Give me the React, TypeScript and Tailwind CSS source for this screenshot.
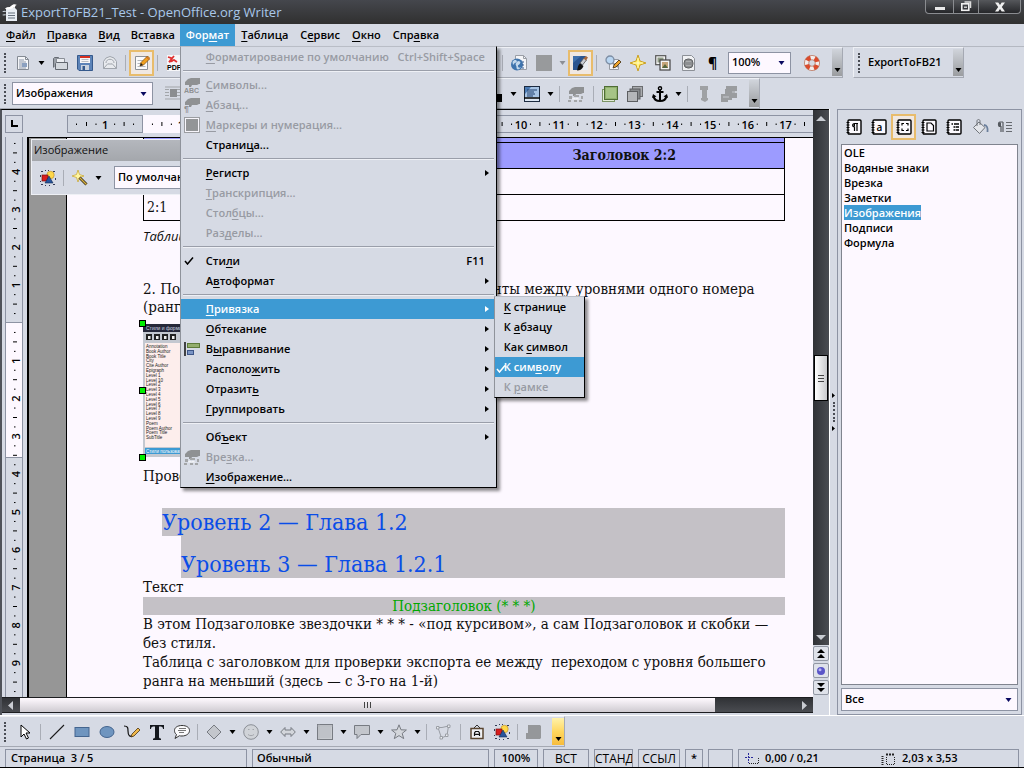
import React from "react";

type Kids = { children?: React.ReactNode };

/** Renders a label; the letter after "&" is the keyboard accelerator. */
function Label({ text }: { text: string }) {
  const i = text.indexOf("&");
  if (i < 0) return <>{text}</>;
  return (
    <>
      {text.slice(0, i)}
      <span className="underline underline-offset-2">{text[i + 1]}</span>
      {text.slice(i + 2)}
    </>
  );
}

function Svg({ children, w = 16, h = 16 }: Kids & { w?: number; h?: number }) {
  return (
    <svg width={w} height={h} viewBox={`0 0 ${w} ${h}`} className="block shrink-0" aria-hidden="true">
      {children}
    </svg>
  );
}

/* ---------- icons ---------- */

const Caret = ({ color = "#000" }: { color?: string }) => (
  <Svg w={7} h={4}>
    <path d="M0.5 0h6L3.500 4z" fill={color} />
  </Svg>
);

const WriterLogo = () => (
  <Svg w={17} h={19}>
    <path d="M4 5h9l2 2v11H4z" fill="#e9eef4" />
    <path d="M6 10h7M6 12.500h7M6 15h7" stroke="#66707c" strokeWidth="1.200" />
    <path d="M3 6c2-3 4-1 6-3 2-2 4-2 6-1-2 0-2 2-2 3-2-1-3 1-5 1-2 1-3 0-5 0z" fill="#fff" />
    <path d="M0 8.500c2-1 3-1 5 0-2 0-3 1-5 0zM0 12c2-1 3-1 5 0-2 0-3 1-5 0z" fill="#cfd7e0" />
  </Svg>
);

const NewDoc = () => (
  <Svg>
    <path d="M2.500 1.500h8l3 3v10h-11z" fill="#f4f5f8" stroke="#858b94" />
    <path d="M10.500 1.500v3h3" fill="none" stroke="#858b94" />
    <path d="M4 5h5M4 7h7M4 9h3M4 11h3M4 13h7" stroke="#8d97a8" />
    <rect x="7" y="8" width="5" height="4" fill="#8ba0c0" />
  </Svg>
);
const OpenFolder = () => (
  <Svg>
    <path d="M1.500 12.500v-9l1-1h4l1 2h5v3" fill="#9ba0a8" stroke="#666b73" />
    <path d="M4.500 3.500h8v9h-8z" fill="#eceef2" stroke="#8a8f97" />
    <path d="M3.500 14.500v-6l1-1h11v7z" fill="#d4d8de" stroke="#62676f" />
  </Svg>
);
const Floppy = () => (
  <Svg>
    <path d="M.5.500h15v15H2L.5 14z" fill="#5c83b8" stroke="#35598c" />
    <rect x="3" y="1" width="10" height="7" fill="#f5f5f7" />
    <path d="M3 2h10" stroke="#d83020" strokeWidth="2" />
    <path d="M4.500 4.500h7M4.500 6.500h7" stroke="#b9bdc4" />
    <rect x="4" y="10" width="8" height="5" fill="#c9d2de" />
    <rect x="5.500" y="11" width="2.500" height="4" fill="#35598c" />
  </Svg>
);
const Mail = () => (
  <Svg>
    <path d="M1.500 6.500L4 3l4-1.500L12 3l2.500 3.500v7h-13z" fill="#e8eaee" stroke="#a0a5ad" />
    <path d="M1.500 13.500l4.500-5M14.500 13.500l-4.500-5M4 8c0-5 8-5 8 0M6 9h4" fill="none" stroke="#a0a5ad" />
  </Svg>
);
const EditFile = () => (
  <Svg>
    <path d="M1.500 1.500h12v13h-12z" fill="#fafafc" stroke="#8c9097" />
    <path d="M3.500 5.500h6M3.500 8.500h5M3.500 11.500h8" stroke="#b2b6bd" />
    <path d="M6 11l1-3.500L13.500 1l2.500 2.500L9.500 10z" fill="#f0a020" stroke="#8a5510" strokeWidth=".8" />
    <path d="M6 11l1-3 2 2z" fill="#222" />
    <path d="M12.500 2l2.500 2.500" stroke="#c8502a" />
  </Svg>
);
const Pdf = () => (
  <Svg>
    <path d="M1 0h14v16H1z" fill="#f6f6f8" />
    <path d="M2 2l3 1 1 4M8 1L3 7l5-2 3 2" stroke="#e03030" strokeWidth="1.800" fill="none" />
    <text x="1" y="15" fontSize="7" fontWeight="700" fontFamily="Liberation Sans, sans-serif">PDF</text>
  </Svg>
);
const GlobeDoc = () => (
  <Svg>
    <path d="M4.500.500h8l3 3v11h-11z" fill="#f4f5f8" stroke="#9a9ea6" />
    <path d="M12.500.500v3h3" fill="none" stroke="#9a9ea6" />
    <circle cx="6" cy="9.500" r="6" fill="#3f74ad" />
    <path d="M1.500 7c1-2 3-2.500 4-1.500s0 2-1.500 2.500-1 1.500-2 2zM7 6c2 0 3 1 2 2.500S6.500 10 7 11.500 9 13 10 12c-1 2-3 3-4 2s0-2-1-3.500 0-3 2-4.500z" fill="#c3d8ec" />
    <path d="M12 6v8" stroke="#35598c" strokeDasharray="2 1" />
  </Svg>
);
const GraySquare = () => (
  <Svg>
    <rect width="16" height="16" fill="#989a9c" />
  </Svg>
);
const DrawPen = () => (
  <Svg>
    <path d="M0 1h15v14H0z" fill="#e9edf3" />
    <path d="M0 1h13L7 15H0z" fill="#2a5490" />
    <path d="M0 8L8 1H0z" fill="#3f70ac" />
    <path d="M7 8l4-5 2.500 2L9.500 10z" fill="#c9cdd4" stroke="#555" strokeWidth=".8" />
    <path d="M10.500 3.500L13 1l2 1.500L13 5.500z" fill="#a8683c" />
    <path d="M4 15.500c1-2 0-4 3-7L10.500 11c-1 3-3.500 4.500-6.500 4.500z" fill="#111" />
  </Svg>
);
const FindReplace = () => (
  <Svg>
    <path d="M4.500 4.500h9v10h-9z" fill="#f6f6f9" stroke="#979ba3" />
    <circle cx="5" cy="5" r="4" fill="#b9d6f2" stroke="#7e8ea4" strokeWidth="1.300" />
    <path d="M7.500 8L13 12" stroke="#8a8f96" strokeWidth="2" />
    <path d="M8 13l1-3 5-5 2 2-5 5z" fill="#efa32a" stroke="#3c2a0c" strokeWidth=".8" />
  </Svg>
);
const Navigator = () => (
  <Svg>
    <path d="M8 0l2 6 6 2-6 2-2 6-2-6-6-2 6-2z" fill="#ffe84a" stroke="#c89a1c" strokeWidth=".9" />
    <path d="M8 3v10M3 8h10" stroke="#fffbd0" />
  </Svg>
);
const Gallery = () => (
  <Svg>
    <rect x=".7" y=".7" width="10" height="9" fill="#f4f4f4" stroke="#555" strokeWidth="1.200" />
    <rect x="2.500" y="2.500" width="6" height="5" fill="#8f9b86" />
    <rect x="5" y="5" width="10" height="10" fill="#f4f4f4" stroke="#444" strokeWidth="1.200" />
    <rect x="7" y="7" width="6" height="6" fill="#c6a57a" />
    <path d="M7 13l3-4 3 4z" fill="#55663e" />
  </Svg>
);
const DataSource = () => (
  <Svg>
    <path d="M2.500.500h9l3 3v12h-12z" fill="#f0f1f3" stroke="#8c9097" />
    <rect x="4" y="4" width="9" height="9" rx="4" fill="#8d8f91" stroke="#606264" />
    <path d="M6 6.500h5M6 10.500h5" stroke="#a9abad" />
  </Svg>
);
const Lifebuoy = () => (
  <Svg>
    <circle cx="8" cy="8" r="5.500" fill="none" stroke="#f3eeee" strokeWidth="4.500" />
    <circle cx="8" cy="8" r="5.500" fill="none" stroke="#dc4a2c" strokeWidth="4.500" strokeDasharray="4.320 4.320" strokeDashoffset="-2.160" />
    <circle cx="8" cy="8" r="7.600" fill="none" stroke="#b5674e" strokeWidth=".7" />
    <circle cx="8" cy="8" r="3.300" fill="none" stroke="#b5674e" strokeWidth=".7" />
  </Svg>
);
const WrapIcon = () => (
  <Svg>
    <path d="M0 1h16M0 3.500h4M12 3.500h4M0 6.500h4M12 6.500h4M0 9.500h4M12 9.500h4M0 13h16" stroke="#a2a5a9" />
    <rect x="5" y="3" width="7" height="8" fill="#8b8d90" />
  </Svg>
);
const BorderStyle = () => (
  <Svg>
    <rect x=".5" y=".5" width="15" height="15" fill="#dce6f2" stroke="#1d2b40" />
    <rect x="1" y="1" width="14" height="10" fill="#a8c4e4" />
    <path d="M1 1h6L1 8z" fill="#4a7ab4" />
    <path d="M3 4h10M3 6h7M3 8h8M3 10h6" stroke="#1f3f6c" />
    <path d="M0 12h16" stroke="#000" strokeWidth="1.500" />
  </Svg>
);
const Hand = () => <path d="M4 2l3-1h9v6h-1l-2 1H8L7 10H5V8H1V5z" fill="#8f9193" />;
const FrameHand = () => (
  <Svg>
    <Hand />
    <path d="M1 10h3v3H1zM6 9h5v2H6zM13 10h2v3h-2zM0 14h3v2H0zM6 14h3v2H6zM11 14h3v2h-3z" fill="#a4a6a8" />
    <path d="M4 12.500l2-1 1.500 1L9 11.500l3 2H4z" fill="#f2f3f6" />
  </Svg>
);
const CharHand = () => (
  <Svg>
    <Hand />
    <text x="0" y="16" fontSize="7" fontWeight="700" fill="#8f9193" fontFamily="Liberation Sans, sans-serif">ABC</text>
  </Svg>
);
const ParaHand = () => (
  <Svg>
    <Hand />
    <text x="0" y="15" fontSize="9" fontWeight="700" fill="#8f9193" fontFamily="Liberation Sans, sans-serif">¶</text>
  </Svg>
);
const BulletsIcon = () => (
  <Svg>
    <rect x=".5" y=".5" width="15" height="15" fill="#f7f5fb" stroke="#9b9da1" />
    <rect x="2" y="2" width="12" height="12" fill="#939597" />
  </Svg>
);
const BringFront = () => (
  <Svg>
    <rect x=".5" y="3.500" width="12" height="12" fill="#e3ebd8" stroke="#7b9464" />
    <rect x="2.500" y=".5" width="13" height="13" fill="#8fb06c" stroke="#4f6d35" />
    <rect x="4" y="2" width="10" height="10" fill="#a6c486" />
  </Svg>
);
const SendBack = () => (
  <Svg>
    <rect x="5.500" y=".5" width="10" height="10" fill="#a9abae" stroke="#6b6d70" />
    <rect x="3" y="3" width="10" height="10" fill="#86898c" stroke="#5c5e61" />
    <rect x=".5" y="5.500" width="10" height="10" fill="#b4b6b9" stroke="#5c5e61" />
  </Svg>
);
const Anchor = () => (
  <Svg>
    <circle cx="8" cy="2.300" r="1.600" fill="none" stroke="#000" strokeWidth="1.400" />
    <path d="M8 4v11M4.500 6h7M1.500 10c.5 3 3 5 6.500 5s6-2 6.500-5" stroke="#000" strokeWidth="2" fill="none" />
    <path d="M0 12l1-4 3.500 2.500zM16 12l-1-4-3.500 2.500z" />
  </Svg>
);
const AlignGray = () => (
  <Svg>
    <path d="M4 0h8v4h-1v8h1v2l-3 2-4-2v-2h1V4H4z" fill="#9fa1a4" />
  </Svg>
);
const GroupGray = () => (
  <Svg w={18}>
    <path d="M6 0h11v5h-2v2h2v5h-5v2h-4v2H1V8h4V3h1z" fill="#9a9c9f" />
    <path d="M12 6h5M3 11h6" stroke="#c6c9cf" />
  </Svg>
);
const PictureShapes = () => (
  <Svg>
    <path d="M1 1h2v1H1zM5 0h1v1H5zM8 0h1v1H8zM13 1h2v1h-2zM0 5h1v2H0zM15 8h1v2h-1zM0 11h1v1H0zM1 14h2v1H1zM5 15h1v1H5zM9 15h1v1H9zM13 14h2v1h-2z" fill="#333a55" />
    <circle cx="10.500" cy="5" r="3.700" fill="#ffd84a" stroke="#b98a1c" strokeWidth=".6" />
    <rect x="2" y="5" width="6" height="6" fill="#d81e1e" stroke="#7c1010" strokeWidth=".7" />
    <path d="M5 13l4-7 4 7z" fill="#27549c" stroke="#122a52" strokeWidth=".6" />
  </Svg>
);
const Wand = () => (
  <Svg>
    <path d="M6 0l1.500 4.500L12 6 7.500 7.500 6 12 4.500 7.500 0 6l4.500-1.500z" fill="#fff6a0" stroke="#c7a42c" strokeWidth=".7" />
    <path d="M7.500 7.500l7 7" stroke="#3b3320" strokeWidth="3" />
    <path d="M7.500 7.500l7 7" stroke="#d9b23c" strokeWidth="1.300" />
  </Svg>
);
const AlignMenu = () => (
  <Svg>
    <path d="M1 1v14" stroke="#000" strokeWidth="1.400" />
    <rect x="3.500" y="2.500" width="12" height="4" fill="#93ad6c" stroke="#5d7a3a" />
    <rect x="3.500" y="9.500" width="6" height="4" fill="#7a94c4" stroke="#3d5688" />
  </Svg>
);
const Check = () => (
  <Svg w={10} h={8}>
    <path d="M1 4l2.500 3L9 .5" fill="none" stroke="currentColor" strokeWidth="1.500" />
  </Svg>
);

/* drawing toolbar */
const Pointer = () => (
  <Svg>
    <path d="M4 1v12l3-3 2.500 5 2-1L9 9h4z" fill="#fff" stroke="#000" />
  </Svg>
);
const LineIcon = () => (
  <Svg>
    <path d="M1 15L15 1" stroke="#1c1c1c" strokeWidth="1.100" />
  </Svg>
);
const RectIcon = () => (
  <Svg>
    <rect x="1" y="3.500" width="14" height="9" fill="#6f95bf" stroke="#44658f" />
  </Svg>
);
const EllipseIcon = () => (
  <Svg>
    <ellipse cx="8" cy="8" rx="7" ry="5.500" fill="#6f95bf" stroke="#44658f" />
  </Svg>
);
const Freehand = () => (
  <Svg>
    <path d="M0 2c4 0 4 2 4 5 0 5 2 6 5 5" stroke="#111" fill="none" strokeWidth="1.200" />
    <path d="M7 13l1-3 6-6 2 2-6 6z" fill="#f0b84a" stroke="#4a3410" strokeWidth=".8" />
  </Svg>
);
const TextIcon = () => (
  <Svg>
    <path d="M1 1h14v4h-1c0-2-1-2.500-4-2.500V13c0 1 1 1.500 2 1.500V16H4v-1.500c1 0 2-.5 2-1.500V2.500C3 2.500 2 3 2 5H1z" fill="#14171c" />
  </Svg>
);
const Speech = () => (
  <Svg w={18}>
    <path d="M9 1.500c4.500 0 7.500 2 7.500 5s-3 5.500-7.500 5.500c-1 0-2 0-2.500-.3L2 14.500l1.500-4C2 9.500 1.500 8 1.500 6.500c0-3 3-5 7.500-5z" fill="#fafafc" stroke="#333" />
    <path d="M6 4.500h7M5 6.500h8M6 8.500h5" stroke="#777" />
  </Svg>
);
const GRAY_FILL = "#c3c6cc";
const GRAY_LINE = "#777b82";
const Diamond = () => (
  <Svg>
    <path d="M8 1l7 7-7 7-7-7z" fill={GRAY_FILL} stroke={GRAY_LINE} />
  </Svg>
);
const Smiley = () => (
  <Svg>
    <circle cx="8" cy="8" r="7.300" fill="#d0d3d8" stroke="#8a8e95" />
    <path d="M5 5.500h1.500M9.500 5.500H11M5 10.500c1.500 1.500 4.500 1.500 6 0" stroke="#a3a6ac" fill="none" />
  </Svg>
);
const DoubleArrow = () => (
  <Svg>
    <path d="M.7 8L5 3.500v2.500h6V3.500L15.300 8 11 12.500V10H5v2.500z" fill="#d3d6db" stroke={GRAY_LINE} />
  </Svg>
);
const Flowchart = () => (
  <Svg>
    <rect x=".5" y=".5" width="15" height="15" fill="#c9ccd1" stroke={GRAY_LINE} />
    <path d="M2 .5v15M.5 2h15" stroke="#b0b3b9" />
    <rect x="3" y="3" width="11" height="11" fill="#bfc2c8" />
  </Svg>
);
const Callout = () => (
  <Svg>
    <path d="M.5 1.500h15v9H7l-4 4v-4H.5z" fill={GRAY_FILL} stroke={GRAY_LINE} />
  </Svg>
);
const Star = () => (
  <Svg>
    <path d="M8 .8l2 5 5.400.2-4.200 3.400 1.500 5.200L8 11.600l-4.700 3 1.500-5.200L.6 6l5.400-.2z" fill="#d3d6db" stroke={GRAY_LINE} />
  </Svg>
);
const Points = () => (
  <Svg>
    <path d="M3 3.500h4l6.500-1.500-1.500 9.500-5.500 2.500L3 3.500z" fill="none" stroke="#9a9ea5" />
    <path d="M1.500 2.500h2.500v2.500H1.500zM12.500 1h2.500v2.500h-2.500zM10.500 10h2.500v2.500h-2.500zM5 12.500h2.500v2.500H5z" fill="#eceef2" stroke="#9a9ea5" />
  </Svg>
);
const Fontwork = () => (
  <Svg>
    <path d="M5 4l3-3 3 3" fill="none" stroke="#333" />
    <rect x="2" y="4.500" width="12" height="10" fill="#f0f1f4" stroke="#5a4630" strokeWidth="1.500" />
    <path d="M5.500 12V9l1-1.500h3l1 1.500v3M5.500 10.300h5" fill="none" stroke="#111" strokeWidth="1.200" />
  </Svg>
);
const Extrusion = () => (
  <Svg>
    <path d="M2 1h12l1 1v12l-1 1H0V9h2z" fill="#95979a" />
  </Svg>
);

/* styles panel */
function StyleIcon({ children }: Kids) {
  return (
    <Svg>
      <rect x="2" y="1" width="13" height="14" rx="1" fill="#fbf9fe" stroke="#000" strokeWidth="1.400" />
      <path d="M.5 3.500h3M.5 6h3M.5 8.500h3M.5 11h3M.5 13.500h3" stroke="#000" />
      {children}
    </Svg>
  );
}
const Bucket = () => (
  <Svg w={17}>
    <path d="M1.500 8.500L7 3l6 5.500-5.500 6z" fill="#e3e5ea" stroke="#70747b" />
    <path d="M5 7V2c0-2 3-2 3 0v4" fill="none" stroke="#70747b" />
    <path d="M12 6c3 0 4 3 3.500 7" stroke="#6b7f9c" strokeWidth="1.800" fill="none" />
  </Svg>
);
const NewStyle = () => (
  <Svg w={18}>
    <path d="M6 3H3C1 3 1 7.500 3 7.500h1V13M6 3v10" fill="none" stroke="#55595f" strokeWidth="1.200" />
    <path d="M2 3.500h2V7H2z" fill="#55595f" />
    <path d="M9 3.500h6M9 6.500h6M9 9.500h6M9 12.500h6" stroke="#66696f" />
  </Svg>
);

/* ---------- toolbar primitives ---------- */

function Tool({ name, children, active = false }: Kids & { name: string; active?: boolean }) {
  return (
    <button
      type="button"
      aria-label={name}
      className={
        active
          ? "flex h-[26px] w-[25px] shrink-0 items-center justify-center border-2 border-[#e8bc6c] bg-[#f0e8e2]"
          : "flex h-[26px] w-[25px] shrink-0 items-center justify-center"
      }
    >
      {children}
    </button>
  );
}

function DropTool({ name, muted = false }: { name: string; muted?: boolean }) {
  return (
    <button type="button" aria-label={name} className="flex h-[26px] w-3 shrink-0 items-center justify-center">
      <Caret color={muted ? "#8c8f95" : "#000"} />
    </button>
  );
}

const Sep = () => (
  <div className="flex w-[7px] shrink-0 justify-center">
    <div className="h-4 w-px bg-[#a9adb6]" />
  </div>
);

const Grip = () => <div className="mx-1 h-5 w-0 shrink-0 border-l-2 border-dotted border-[#4a4d55]" />;

function Overflow({ yellow = false }: { yellow?: boolean }) {
  return (
    <button
      type="button"
      aria-label="Параметры панели"
      className={
        yellow
          ? "flex h-[27px] w-3 shrink-0 items-end justify-center bg-gradient-to-b from-[#fff2a8] via-[#ffd75e] to-[#f7bc3c] pb-1"
          : "flex h-[27px] w-[10px] shrink-0 items-end justify-center bg-gradient-to-b from-[#d0d4db] to-[#9b9da0] pb-1"
      }
    >
      <Caret />
    </button>
  );
}

function Combo({ label, value, className }: { label: string; value: string; className: string }) {
  return (
    <div className={className}>
      <select
        aria-label={label}
        defaultValue={value}
        className="h-full w-full appearance-none border border-[#8d93a3] bg-[#fdf8ff] pl-[3px] font-semibold outline-none"
      >
        <option>{value}</option>
      </select>
      <div className="pointer-events-none absolute inset-y-0 right-1.5 flex items-center">
        <Caret color="#0a0a60" />
      </div>
    </div>
  );
}

/* ---------- window chrome ---------- */

function TitleBar() {
  return (
    <header className="flex h-6 shrink-0 items-center justify-between bg-gradient-to-b from-[#45474d] to-[#303030] pl-0.5">
      <div className="flex items-center gap-0.5">
        <WriterLogo />
        <h1 className="pt-0.5 text-[13px] font-normal text-[#a9c8ea]">ExportToFB21_Test - OpenOffice.org Writer</h1>
      </div>
      <div className="mr-[3px] flex h-[14px] self-start rounded-b border border-t-0 border-[#8a8c90] bg-gradient-to-b from-[#55575b] to-[#26272a]">
        <button type="button" aria-label="Свернуть" className="flex w-7 items-end justify-center border-r border-[#8a8c90] pb-[3px]">
          <span className="h-[3px] w-[10px] bg-[#e8e8e8]" />
        </button>
        <button type="button" aria-label="Восстановить" className="flex w-[25px] items-center justify-center border-r border-[#8a8c90]">
          <Svg w={12} h={11}>
            <path d="M4.500 1h6v6" fill="none" stroke="#ddd" strokeWidth="1.500" />
            <rect x="1.800" y="2.800" width="7" height="6.500" fill="none" stroke="#f0f0f0" strokeWidth="1.600" />
            <path d="M4 6.200h3" stroke="#f0f0f0" strokeWidth="1.200" />
          </Svg>
        </button>
        <button type="button" aria-label="Закрыть" className="flex w-[41px] items-center justify-center">
          <Svg w={10} h={10}>
            <path d="M0 .5h3.300L5 3 6.700.500H10L6.800 5 10 9.500H6.700L5 7 3.300 9.500H0L3.200 5z" fill="#f0f0f0" />
          </Svg>
        </button>
      </div>
    </header>
  );
}

type Entry =
  | "-"
  | { label: string; off?: boolean; key?: string; sub?: boolean; on?: boolean; checked?: boolean; icon?: React.ReactNode };

const formatMenu: Entry[] = [
  { label: "&Форматирование по умолчанию", key: "Ctrl+Shift+Space", off: true },
  "-",
  { label: "&Символы...", off: true, icon: <CharHand /> },
  { label: "&Абзац...", off: true, icon: <ParaHand /> },
  { label: "&Маркеры и нумерация...", off: true, icon: <BulletsIcon /> },
  { label: "Страни&ца..." },
  "-",
  { label: "&Регистр", sub: true },
  { label: "&Транскрипция...", off: true },
  { label: "Стол&бцы...", off: true },
  { label: "Раз&делы...", off: true },
  "-",
  { label: "Сти&ли", key: "F11", checked: true },
  { label: "А&втоформат", sub: true },
  "-",
  { label: "&Привязка", sub: true, on: true },
  { label: "&Обтекание", sub: true },
  { label: "В&ыравнивание", sub: true, icon: <AlignMenu /> },
  { label: "Располо&жить", sub: true },
  { label: "Отразит&ь", sub: true },
  { label: "&Группировать", sub: true },
  "-",
  { label: "Об&ъект", sub: true },
  { label: "Вре&зка...", off: true, icon: <FrameHand /> },
  { label: "&Изображение..." },
];

const anchorMenu: Entry[] = [
  { label: "&К странице" },
  { label: "К &абзацу" },
  { label: "Как &символ" },
  { label: "К сим&волу", on: true, checked: true },
  { label: "К &рамке", off: true },
];

function Menu({ name, entries, wide }: { name: string; entries: Entry[]; wide: boolean }) {
  return (
    <ul
      role="menu"
      aria-label={name}
      className="border border-t-[#b9bdc6] border-r-black border-b-black border-l-[#8f939b] bg-[#d6dae4] shadow-[3px_3px_3px_rgba(0,0,0,0.45)]"
    >
      {entries.map((e, i) =>
        e === "-" ? (
          <li key={i} role="separator" className="flex h-2 items-center px-0.5">
            <div className="h-0.5 w-full border-t border-[#9a9ea9] bg-[#eef0f5]" />
          </li>
        ) : (
          <li key={i} role="none">
            <button
              type="button"
              role="menuitem"
              disabled={e.off}
              className={
                (wide ? "grid-cols-[25px_1fr_auto] pr-[11px] " : "grid-cols-[9px_1fr] ") +
                "grid h-5 w-full items-center text-left " +
                (e.on ? "bg-[#3d9ad3] text-white" : e.off ? "text-[#989ba3]" : "text-black")
              }
            >
              <span className={wide ? "pl-[3px]" : "pt-1 pl-px"}>{e.checked ? <Check /> : e.icon}</span>
              <span className="whitespace-nowrap">
                <Label text={e.label} />
              </span>
              {e.key && <span>{e.key}</span>}
              {e.sub && (
                <span className="-mr-1">
                  <Svg w={4} h={6}>
                    <path d="M0 0l4 3-4 3z" fill="currentColor" />
                  </Svg>
                </span>
              )}
            </button>
          </li>
        ),
      )}
    </ul>
  );
}

function MenuBar() {
  const before = ["&Файл", "&Правка", "&Вид", "Вс&тавка"];
  const after = ["&Таблица", "С&ервис", "&Окно", "Спр&авка"];
  return (
    <nav className="flex h-[22px] shrink-0 items-stretch">
      {before.map((m) => (
        <button key={m} type="button" className="pr-[5px] pl-1.5">
          <Label text={m} />
        </button>
      ))}
      <div className="relative">
        <button type="button" aria-expanded="true" className="h-full bg-[#3d9ad3] px-1.5 text-white">
          <Label text="Фор&мат" />
        </button>
        <div className="absolute top-full left-0 z-30 w-[317px]">
          <Menu name="Формат" entries={formatMenu} wide />
          <div className="absolute top-[250px] left-[314px] w-[91px]">
            <Menu name="Привязка" entries={anchorMenu} wide={false} />
          </div>
        </div>
      </div>
      {after.map((m) => (
        <button key={m} type="button" className="px-1.5">
          <Label text={m} />
        </button>
      ))}
    </nav>
  );
}

const BAR = "flex h-[31px] items-center border-t border-r border-b border-t-[#eef0f5] border-r-[#a5a9b3] border-b-[#a5a9b3]";

function StandardBar() {
  return (
    <div className="flex shrink-0 gap-[10px] border-t border-[#b4b8c1]">
      <div className={BAR}>
        <Grip />
        <Tool name="Создать"><NewDoc /></Tool>
        <DropTool name="Типы документов" />
        <Tool name="Открыть"><OpenFolder /></Tool>
        <Tool name="Сохранить"><Floppy /></Tool>
        <Tool name="Документ как письмо"><Mail /></Tool>
        <Sep />
        <Tool name="Редактировать файл" active><EditFile /></Tool>
        <Sep />
        <Tool name="Экспорт в PDF"><Pdf /></Tool>
        <div className="w-[313px]" />
        <Sep />
        <Tool name="Гиперссылка"><GlobeDoc /></Tool>
        <Tool name="Таблица"><GraySquare /></Tool>
        <DropTool name="Размер таблицы" muted />
        <Tool name="Функции рисования" active><DrawPen /></Tool>
        <Sep />
        <Tool name="Найти и заменить"><FindReplace /></Tool>
        <Tool name="Навигатор"><Navigator /></Tool>
        <Tool name="Галерея"><Gallery /></Tool>
        <Tool name="Источники данных"><DataSource /></Tool>
        <Tool name="Непечатаемые символы"><span className="text-sm font-bold">¶</span></Tool>
        <Combo label="Масштаб" value="100%" className="relative ml-[3px] h-[22px] w-[63px]" />
        <div className="mx-2"><Tool name="Справка"><Lifebuoy /></Tool></div>
        <Overflow />
      </div>
      <div className={BAR + " border-l border-l-[#eef0f5]"}>
        <Grip />
        <button type="button" className="pr-3 pl-1">ExportToFB21</button>
        <Overflow />
      </div>
    </div>
  );
}

function FrameBar() {
  return (
    <div className="flex shrink-0">
      <div className={BAR}>
        <Grip />
        <Combo label="Применить стиль" value="Изображения" className="relative ml-0.5 h-[23px] w-[141px]" />
        <div className="w-[7px]" />
        <Tool name="Обтекание"><WrapIcon /></Tool>
        <div className="w-[309px]" />
        <div className="mt-2 h-2 w-2 bg-black" />
        <div className="w-[5px]" />
        <DropTool name="Стиль линии" />
        <Tool name="Обрамление"><BorderStyle /></Tool>
        <DropTool name="Варианты обрамления" />
        <Sep />
        <Tool name="Свойства врезки"><FrameHand /></Tool>
        <div className="w-0.5" />
        <Sep />
        <Tool name="На передний план"><BringFront /></Tool>
        <Tool name="На задний план"><SendBack /></Tool>
        <Tool name="Привязка"><Anchor /></Tool>
        <DropTool name="Варианты привязки" />
        <Sep />
        <Tool name="Расцепить"><AlignGray /></Tool>
        <Tool name="Сцепить"><GroupGray /></Tool>
        <div className="w-2" />
        <Overflow />
      </div>
    </div>
  );
}

/* ---------- rulers ---------- */

const CM = 37.8;

function HRuler() {
  const zero = 76;
  const cms = Array.from({ length: 19 }, (_, i) => i - 1);
  return (
    <svg className="block h-[18px] min-w-0 flex-1" aria-label="Горизонтальная линейка">
      <rect x="0" y="0" width="100%" height="18" fill="#d6dae4" />
      <path d="M0 .5h4000M0 17.500h4000" stroke="#8d93a3" />
      <rect x=".5" y=".5" width="75" height="17" fill="#d0d5df" stroke="#8d93a3" />
      <rect x="76" y="0" width="77" height="18" fill="#fdf8ff" />
      {cms.map((n) => {
        const x = zero + n * CM;
        return (
          <g key={n}>
            {n !== 0 && (
              <text x={x} y="14" textAnchor="middle" fontSize="11">
                {Math.abs(n)}
              </text>
            )}
            <path d={`M${x + CM / 2} 7v4`} stroke="#000" />
            <path d={`M${x + CM / 4} 8.500v1.500M${x + (CM * 3) / 4} 8.500v1.500`} stroke="#000" />
          </g>
        );
      })}
      <path d="M9.500 8.500v1.500M19.500 7v4M29 8.500v1.500" stroke="#000" />
    </svg>
  );
}

function VRuler() {
  const zero = 186;
  const cms = Array.from({ length: 15 }, (_, i) => i - 5);
  return (
    <svg className="block h-full w-[18px]" aria-label="Вертикальная линейка">
      <path d="M.5 0v4000M17.500 0v4000" stroke="#8d93a3" />
      <rect x="1" y="185" width="16" height="135" fill="#fdf8ff" />
      <path d="M0 185.500h18M0 320.500h18" stroke="#8d93a3" />
      {cms.map((n) => {
        const y = zero + n * CM;
        return (
          <g key={n}>
            {n !== 0 && n !== -5 && (
              <text x="0" y="0" transform={`translate(15 ${y}) rotate(-90)`} textAnchor="middle" fontSize="11">
                {Math.abs(n)}
              </text>
            )}
            <path d={`M8 ${y + CM / 2}h4`} stroke="#000" />
            <path d={`M9 ${y + CM / 4}h1.500M9 ${y + (CM * 3) / 4}h1.500`} stroke="#000" />
          </g>
        );
      })}
    </svg>
  );
}

/* ---------- document ---------- */

const thumbItems = [
  "Annotation", "Book Author", "Book Title", "City", "Cite Author", "Epigraph", "Level 1", "Level 10", "Level 2",
  "Level 3", "Level 4", "Level 5", "Level 6", "Level 7", "Level 8", "Level 9", "Poem", "Poem Author", "Poem Title", "SubTitle",
];

function Picture() {
  return (
    <svg
      width="77"
      height="133"
      viewBox="0 0 77 133"
      className="block font-['Liberation_Sans',sans-serif]"
      role="img"
      aria-label="Окно стилей"
    >
      <rect width="77" height="133" fill="#c4c8d0" />
      <rect width="77" height="8" fill="#26283a" />
      <text x="3" y="6" fontSize="5" fill="#cfd6e4">Стили и форматирование</text>
      {[3, 11, 19, 27].map((x) => (
        <g key={x}>
          <rect x={x} y="10" width="6" height="6" fill="#222" />
          <rect x={x + 2} y="12" width="2.500" height="3" fill="#eee" />
        </g>
      ))}
      <rect x="2" y="19" width="73" height="104" fill="#fdeeec" />
      {thumbItems.map((t, i) => (
        <text key={t} x="3" y={24 + i * 4.8} fontSize="4.500" fill="#1a1a1a">{t}</text>
      ))}
      <rect x="2" y="124" width="73" height="6" fill="#3d9ad3" />
      <text x="3" y="129" fontSize="4.500" fill="#fff">Стили пользователя</text>
    </svg>
  );
}

const HANDLE = "absolute size-[7px] border border-black bg-[#00f000]";

function ImagePanel() {
  return (
    <section aria-label="Изображение" className="absolute top-px left-0.5 z-10 w-[300px] border border-[#eef0f5] bg-[#d6dae4]">
      <h2 className="flex h-[21px] items-center bg-gradient-to-b from-[#b4b7bd] to-[#a4a7ac] pl-0.5 font-normal text-[#101010]">
        Изображение
      </h2>
      <div className="flex h-[33px] items-center pl-[3px]">
        <Tool name="Из файла"><PictureShapes /></Tool>
        <Sep />
        <Tool name="Фильтр"><Wand /></Tool>
        <DropTool name="Список фильтров" />
        <Combo label="Режим графики" value="По умолчанию" className="relative ml-2.5 h-[23px] w-[120px]" />
      </div>
    </section>
  );
}

function DocumentPage() {
  return (
    <article className="min-w-0 flex-1 overflow-hidden border-l border-black bg-[#fdf8ff] pl-[76px] font-['DejaVu_Serif_Condensed','DejaVu_Serif',serif] text-[15px] leading-[19px] font-normal text-[#101010]">
      <div className="w-[642px]">
        <table className="w-full table-fixed border-collapse text-left text-sm leading-[18px]">
          <thead>
            <tr className="h-1 bg-[#9c9bff]">
              <td className="border-x border-black" />
              <td className="border-x border-black" />
            </tr>
            <tr className="h-[26px] bg-[#9c9bff]">
              <th className="border border-black text-center">Заголовок 2:1</th>
              <th className="border border-black text-center">Заголовок 2:2</th>
            </tr>
          </thead>
          <tbody>
            <tr className="h-[26px]">
              <td className="border border-black" />
              <td className="border border-black" />
            </tr>
            <tr className="h-[26px]">
              <td className="border border-black pl-[3px]">2:1</td>
              <td className="border border-black" />
            </tr>
          </tbody>
        </table>
        <p className="mt-1.5 font-['Open_Sans',sans-serif] text-[13px] italic">Таблица 2</p>
        <p className="mt-[34px] leading-[18px] whitespace-nowrap">
          2. Показать, как экспортируются простые элементы между уровнями одного номера
          <br />
          (ранга)
        </p>
        <div className="relative mt-2 w-[77px]">
          <Picture />
          <span className={HANDLE + " -top-1 -left-1"} />
          <span className={HANDLE + " top-[63px] -left-1"} />
          <span className={HANDLE + " -bottom-1 -left-1"} />
        </div>
        <p className="mt-2.5">Проверка</p>
        <h2 className="mt-[22px] ml-[19px] bg-[#c4c1c6] text-[23px] leading-7 text-[#0a4de8]">Уровень 2 — Глава 1.2</h2>
        <h3 className="ml-[38px] bg-[#c4c1c6] pt-3.5 text-[23px] leading-7 text-[#0a4de8]">Уровень 3 — Глава 1.2.1</h3>
        <p>Текст</p>
        <p className="bg-[#c4c1c6] text-center leading-[18px] text-[#00a800]">
          Подзаголовок (<em>* * *</em>)
        </p>
        <p className="whitespace-nowrap">
          В этом Подзаголовке звездочки * * * - «под курсивом», а сам Подзаголовок и скобки —<br />
          без стиля.
        </p>
        <p className="whitespace-pre">
          {"Таблица с заголовком для проверки экспорта ее между  переходом с уровня большего\nранга на меньший (здесь — с 3-го на 1-й)"}
        </p>
      </div>
    </article>
  );
}

/* ---------- scroll bars ---------- */

const NAV_BTN = "flex h-[15px] items-center justify-center rounded-xs border border-[#9297a3] bg-[#dfe2ea]";

function VScroll() {
  return (
    <div className="flex w-4 shrink-0 flex-col pb-0.5">
      <div className="flex flex-1 flex-col items-center bg-gradient-to-r from-[#303236] to-[#4a4c51] pt-1.5 pb-[5px]">
        <Svg w={10} h={5}><path d="M0 5l5-5 5 5z" fill="#c9ccd2" /></Svg>
        <div className="grow-[233]" />
        <div className="flex h-[46px] w-[14px] flex-col items-center justify-center gap-0.5 border border-black bg-gradient-to-r from-white to-[#c9cacc]">
          <span className="h-px w-1.5 bg-[#444]" />
          <span className="h-px w-1.5 bg-[#444]" />
          <span className="h-px w-1.5 bg-[#444]" />
        </div>
        <div className="grow-[233]" />
        <Svg w={10} h={5}><path d="M0 0l5 5 5-5z" fill="#c9ccd2" /></Svg>
      </div>
      <div className="flex flex-col gap-0.5 pt-px">
        <button type="button" aria-label="Предыдущая страница" className={NAV_BTN}>
          <Svg w={8} h={9}><path d="M0 4l4-4 4 4zM0 9l4-4 4 4z" /></Svg>
        </button>
        <button type="button" aria-label="Навигация" className={NAV_BTN}>
          <Svg w={8} h={8}><circle cx="4" cy="4" r="4" fill="#5a55c8" /><circle cx="3" cy="2.800" r="1.500" fill="#b9b6f4" /></Svg>
        </button>
        <button type="button" aria-label="Следующая страница" className={NAV_BTN}>
          <Svg w={8} h={9}><path d="M0 0l4 4 4-4zM0 5l4 4 4-4z" /></Svg>
        </button>
      </div>
    </div>
  );
}

function HScroll() {
  return (
    <div className="flex h-4 shrink-0 items-center border-t border-b border-[#1c1d20] bg-gradient-to-b from-[#303236] to-[#4a4c51] pr-1.5 pl-1.5">
      <Svg w={5} h={9}><path d="M5 0v9L0 4.500z" fill="#c9ccd2" /></Svg>
      <div className="ml-[7px] flex h-full grow-[693] items-center justify-center gap-0.5 bg-gradient-to-b from-[#fffaff] to-[#cfcbd1]">
        <span className="h-1.5 w-px bg-[#444]" />
        <span className="h-1.5 w-px bg-[#444]" />
        <span className="h-1.5 w-px bg-[#444]" />
      </div>
      <div className="grow-[88]" />
      <Svg w={5} h={9}><path d="M0 0v9l5-4.500z" fill="#c9ccd2" /></Svg>
    </div>
  );
}

/* ---------- styles panel ---------- */

function StylesPanel() {
  const styles = ["OLE", "Водяные знаки", "Врезка", "Заметки", "Изображения", "Подписи", "Формула"];
  return (
    <aside className="mr-0.5 flex w-[185px] shrink-0 flex-col border border-[#8d93a3] px-[3px] pb-[3px]">
      <div className="flex h-[34px] items-center">
        <Tool name="Стили абзацев"><StyleIcon><path d="M12 4.500H8.500c-2.500 0-2.500 3.500 0 3.500v4M11 4.500V12" fill="none" stroke="#000" strokeWidth="1.200" /><path d="M7.500 5h1.500v2.500H7.500z" /></StyleIcon></Tool>
        <Tool name="Стили символов"><StyleIcon><text x="5.500" y="11.500" fontSize="10" fontWeight="600">a</text></StyleIcon></Tool>
        <Tool name="Стили врезок" active><StyleIcon><path d="M6 6.500V4.500h2M10 4.500h2v2M12 9.500v2h-2M8 11.500H6v-2" fill="none" stroke="#000" strokeWidth="1.200" /></StyleIcon></Tool>
        <Tool name="Стили страниц"><StyleIcon><path d="M6 4h4l2.500 2.500V12H6z" fill="none" stroke="#000" strokeWidth="1.200" /></StyleIcon></Tool>
        <Tool name="Стили списков"><StyleIcon><path d="M5.500 5H7M8 5h5M7.500 8H9M9.500 8H13M7.500 11H9M9.500 11H13" stroke="#000" strokeWidth="1.300" /></StyleIcon></Tool>
        <div className="w-0.5" />
        <Tool name="Режим заливки"><Bucket /></Tool>
        <Tool name="Создать стиль"><NewStyle /></Tool>
      </div>
      <ul role="listbox" aria-label="Стили" className="flex-1 border border-[#80848f] bg-[#fdf8ff] pl-0.5">
        {styles.map((s) => (
          <li key={s} role="option" aria-selected={s === "Изображения"} className="flex h-[15px] items-center">
            <span className={s === "Изображения" ? "bg-[#3d9ad3] leading-[15px] text-white" : "leading-[15px]"}>{s}</span>
          </li>
        ))}
      </ul>
      <Combo label="Фильтр стилей" value="Все" className="relative mt-[3px] h-[23px]" />
    </aside>
  );
}

function Splitter() {
  return (
    <div className="flex w-2 shrink-0 flex-col items-center justify-center gap-1 border-l border-white">
      <Svg w={3} h={5}><path d="M0 0l3 2.500L0 5z" /></Svg>
      <span className="h-5 border-l-2 border-dotted border-[#4a4d55]" />
      <Svg w={3} h={5}><path d="M0 0l3 2.500L0 5z" /></Svg>
    </div>
  );
}

/* ---------- bottom bars ---------- */

function DrawingBar() {
  return (
    <div className="flex shrink-0 border-t border-white">
      <div className={BAR}>
        <Grip />
        <div className="w-0.5" />
        <Tool name="Выделить"><Pointer /></Tool>
        <Sep />
        <Tool name="Линия"><LineIcon /></Tool>
        <Tool name="Прямоугольник"><RectIcon /></Tool>
        <Tool name="Эллипс"><EllipseIcon /></Tool>
        <Tool name="Полилиния"><Freehand /></Tool>
        <Tool name="Текст"><TextIcon /></Tool>
        <Tool name="Выноска"><Speech /></Tool>
        <Sep />
        <Tool name="Основные фигуры"><Diamond /></Tool>
        <DropTool name="Ещё основные фигуры" />
        <Tool name="Фигуры-символы"><Smiley /></Tool>
        <DropTool name="Ещё фигуры-символы" />
        <Tool name="Блочные стрелки"><DoubleArrow /></Tool>
        <DropTool name="Ещё стрелки" />
        <Tool name="Блок-схемы"><Flowchart /></Tool>
        <DropTool name="Ещё блок-схемы" />
        <Tool name="Выноски"><Callout /></Tool>
        <DropTool name="Ещё выноски" />
        <Tool name="Звёзды"><Star /></Tool>
        <DropTool name="Ещё звёзды" />
        <Sep />
        <Tool name="Изменение геометрии"><Points /></Tool>
        <div className="w-0.5" />
        <Sep />
        <Tool name="Галерея текстовых эффектов"><Fontwork /></Tool>
        <Tool name="Из файла"><PictureShapes /></Tool>
        <Sep />
        <Tool name="Экструзия"><Extrusion /></Tool>
        <div className="w-1.5" />
        <Overflow yellow />
      </div>
    </div>
  );
}

const CELL = "flex items-center overflow-hidden whitespace-nowrap border-x border-t border-[#8d93a3]";

function StatusBar() {
  return (
    <footer className="flex h-[21px] shrink-0 gap-[5px] border-b border-black px-[5px] pt-0.5">
      <div className={CELL + " w-[242px] pl-[5px]"}>Страница&nbsp; 3 / 5</div>
      <div className={CELL + " w-[237px] pl-1"}>Обычный</div>
      <div className={CELL + " w-11 justify-center"}>100%</div>
      <div className={CELL + " w-[46px] justify-center text-xs font-normal"}>ВСТ</div>
      <div className={CELL + " w-[39px] text-xs font-normal"}>СТАНД</div>
      <div className={CELL + " w-[42px] justify-center text-xs font-normal"}>ССЫЛ</div>
      <div className={CELL + " w-[18px] justify-center"}>*</div>
      <div className={CELL + " w-[25px]"} />
      <div className={CELL + " flex-1 pl-1.5"}>
        <Svg w={14} h={12}>
          <path d="M0 4.500h9M3.500 0v10" stroke="#2a2a9c" strokeDasharray="2 1" />
          <path d="M4 10.500h9.500v-6" fill="none" stroke="#222" strokeDasharray="1 1" />
        </Svg>
        <span className="w-[122px] pl-1.5">0,00 / 0,21</span>
        <Svg w={15} h={12}>
          <path d="M1.500 3v9" stroke="#222" strokeDasharray="1 1" strokeWidth="2" />
          <path d="M5 1.500h9" stroke="#222" strokeDasharray="2 1" strokeWidth="2" />
          <path d="M5.500 4v7.500h8V4" fill="none" stroke="#222" strokeDasharray="1 1" />
        </Svg>
        <span className="pl-1.5">2,03 x 3,53</span>
      </div>
    </footer>
  );
}

export default function App() {
  return (
    <div className="flex h-screen min-h-[480px] flex-col overflow-hidden bg-[#d6dae4] font-['Open_Sans','Noto_Sans',sans-serif] text-[11px] font-semibold text-black">
      <TitleBar />
      <MenuBar />
      <StandardBar />
      <FrameBar />
      <div className="flex min-h-0 flex-1">
        <main className="flex min-w-0 flex-1 flex-col border-t border-l-2 border-t-black border-l-[#50535a] pb-0.5">
          <div className="flex min-h-0 flex-1">
            <div className="flex min-w-0 flex-1 flex-col">
              <div className="flex h-[27px] shrink-0 items-center pl-[3px]">
                <button type="button" aria-label="Тип табуляции" className="flex size-[18px] items-center justify-center border border-[#8d93a3]">
                  <Svg w={7} h={7}><path d="M1 0v6h6" fill="none" stroke="#000" strokeWidth="2" /></Svg>
                </button>
                <div className="w-11" />
                <HRuler />
              </div>
              <div className="flex min-h-0 flex-1 pl-[3px]">
                <VRuler />
                <div className="relative ml-1 flex min-w-0 flex-1 border-t border-l-2 border-black bg-[#969696]">
                  <ImagePanel />
                  <div className="w-[37px] shrink-0" />
                  <DocumentPage />
                </div>
              </div>
            </div>
            <VScroll />
          </div>
          <div className="flex">
            <div className="min-w-0 flex-1"><HScroll /></div>
            <div className="w-4" />
          </div>
        </main>
        <Splitter />
        <StylesPanel />
      </div>
      <DrawingBar />
      <StatusBar />
    </div>
  );
}
